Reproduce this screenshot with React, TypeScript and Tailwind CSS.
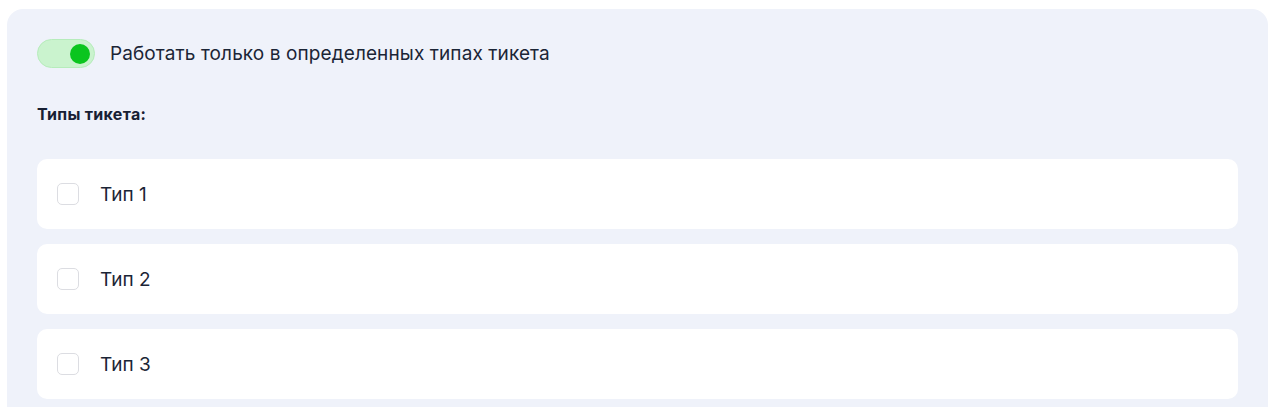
import React, { useState } from 'react';

const types = ['Тип 1', 'Тип 2', 'Тип 3'];

export default function App() {
  const [enabled, setEnabled] = useState(true);
  const [checked, setChecked] = useState<boolean[]>([false, false, false]);

  return (
    <div className="min-h-screen bg-white pt-[9px] px-[7px] pr-[12px] font-['Inter',sans-serif] text-[#1b2536]">
      <div className="bg-[#eff2fa] rounded-t-[16px] px-[30px] pt-[30px] pb-[8px]">
        <div className="flex items-center gap-[15px] h-[29px]">
          <button
            onClick={() => setEnabled(!enabled)}
            className="relative w-[58px] h-[29px] rounded-full bg-[#caf3ce] border border-[#b6ecbb] shrink-0"
          >
            <span className="absolute top-[4px] right-[4px] w-[20px] h-[20px] rounded-full bg-[#0bc51f]" />
          </button>
          <span className="text-[19px] leading-none tracking-[0.1px]">Работать только в определенных типах тикета</span>
        </div>

        <div className="mt-[38px] text-[16px] font-bold leading-none tracking-[0.3px] text-[#172033]">Типы тикета:</div>

        <div className="mt-[37px] flex flex-col gap-[15px]">
          {types.map((t, i) => (
            <label key={t} className="flex items-center h-[70px] bg-white rounded-[10px] pl-[20px] cursor-pointer">
              <input
                type="checkbox"
                checked={checked[i]}
                onChange={() => setChecked(checked.map((c, j) => (j === i ? !c : c)))}
                className="appearance-none w-[22px] h-[22px] rounded-[5px] border border-[#dcdde2] bg-white shrink-0"
              />
              <span className="ml-[21px] text-[19px] leading-none">{t}</span>
            </label>
          ))}
        </div>
      </div>
    </div>
  );
}
